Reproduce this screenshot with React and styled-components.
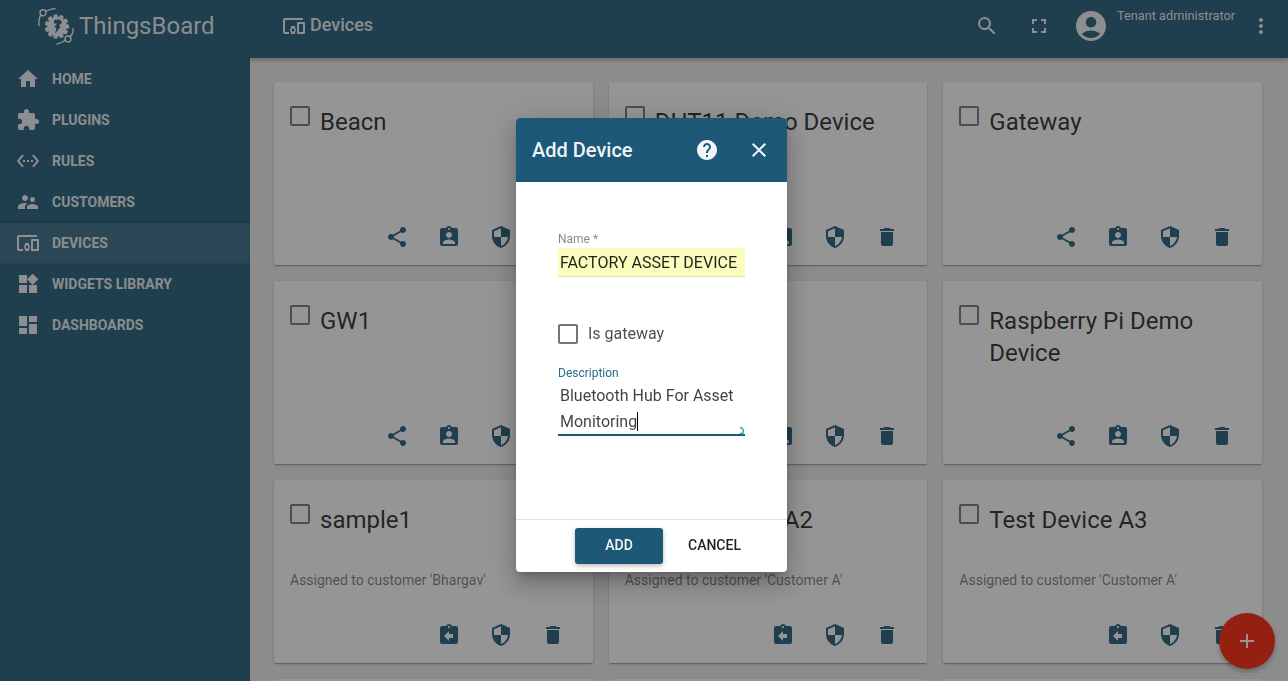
import React from "react";
import styled, { createGlobalStyle } from "styled-components";
import {
  MdHome, MdExtension, MdSettingsEthernet, MdSupervisorAccount, MdDevicesOther, MdWidgets, MdDashboard,
  MdShare, MdAssignmentInd, MdSecurity, MdDelete, MdAssignmentReturn, MdSearch, MdFullscreen,
  MdAccountCircle, MdMoreVert, MdHelp, MdClose, MdAdd,
} from "react-icons/md";

const Global = createGlobalStyle`
  html, body { margin: 0; padding: 0; height: 100%; overflow: hidden; }
  body { font-family: Roboto, "Liberation Sans", sans-serif; background: #eee; }
  * { box-sizing: border-box; }
`;

const Shell = styled.div`
  display: grid;
  grid-template-columns: 250px 1fr;
  width: 1288px;
  height: 681px;
  overflow: hidden;
  background: #eeeeee;
`;
const Sidebar = styled.aside`
  background: #1e5877;
  color: rgba(255,255,255,.92);
  display: flex;
  flex-direction: column;
  box-shadow: inset -1px 0 0 rgba(0,0,0,.12);
  z-index: 2;
`;
const Brand = styled.div`
  height: 59px;
  display: flex;
  align-items: center;
  gap: 4px;
  padding: 0 0 7px 37px;
  font-size: 24px;
  border-bottom: 1px solid rgba(0,0,0,.12);
`;
const NavItem = styled.div`
  height: 41px;
  display: flex;
  align-items: center;
  padding: 0 0 1px 16px;
  gap: 12px;
  font-size: 14px;
  font-weight: 700;
  text-transform: uppercase;
  border-bottom: 1px solid rgba(0,0,0,.12);
  background: ${(p) => (p.$active ? "rgba(255,255,255,.1)" : "transparent")};
  svg { width: 24px; height: 24px; flex: none; }
`;
const Main = styled.main`
  display: flex;
  flex-direction: column;
  min-width: 0;
`;
const Toolbar = styled.header`
  height: 58px;
  flex: none;
  background: #1e5877;
  color: rgba(255,255,255,.92);
  display: flex;
  align-items: center;
  padding: 0 15px 6px 32px;
  box-shadow: 0 2px 4px rgba(0,0,0,.3);
  z-index: 1;
`;
const PageTitle = styled.div`
  display: flex;
  align-items: center;
  gap: 4px;
  font-size: 18px;
  font-weight: 500;
  flex: 1;
  svg { width: 24px; height: 24px; }
  span { padding-bottom: 4px; }
`;
const ToolIcon = styled.span`
  display: flex;
  width: 52px;
  justify-content: center;
  svg { width: 24px; height: 24px; }
`;
const Avatar = styled.span`
  display: flex;
  margin-left: 8px;
  svg { width: 36px; height: 36px; }
`;
const UserName = styled.div`
  font-size: 12.75px;
  width: 132px;
  margin-left: 8px;
  align-self: flex-start;
  padding-top: 8px;
`;
const Grid = styled.div`
  display: grid;
  grid-template-columns: repeat(3, 1fr);
  grid-auto-rows: 183px;
  gap: 16px;
  padding: 24px 26px 0 24px;
`;
const Card = styled.article`
  background: #fff;
  border-radius: 2px;
  box-shadow: 0 1px 3px rgba(0,0,0,.2), 0 1px 1px rgba(0,0,0,.14), 0 2px 1px -1px rgba(0,0,0,.12);
  display: flex;
  flex-direction: column;
  padding: 24px 14px 16px 16px;
`;
const CardHead = styled.div`
  display: flex;
  gap: 10px;
`;
const Check = styled.span`
  display: block;
  flex: none;
  width: 20px;
  height: 20px;
  border: 2px solid rgba(0,0,0,.54);
  border-radius: 2px;
`;
const CardTitle = styled.h3`
  margin: 0;
  font-size: 24px;
  font-weight: 400;
  line-height: 32px;
  color: rgba(0,0,0,.87);
`;
const Sub = styled.div`
  margin-top: 34px;
  font-size: 14px;
  line-height: 20px;
  color: rgba(0,0,0,.54);
`;
const Actions = styled.div`
  margin-top: auto;
  display: flex;
  justify-content: flex-end;
`;
const Action = styled.span`
  display: flex;
  width: 52px;
  justify-content: center;
  color: #1e5877;
  svg { width: 24px; height: 24px; }
`;
const Fab = styled.button`
  position: fixed;
  left: 1219px;
  top: 613px;
  width: 56px;
  height: 56px;
  border: 0;
  border-radius: 50%;
  padding: 0;
  background: #ff1d00;
  color: #fff;
  display: flex;
  align-items: center;
  justify-content: center;
  box-shadow: 0 3px 5px rgba(0,0,0,.3);
  svg { width: 24px; height: 24px; }
`;
const Backdrop = styled.div`
  position: fixed;
  inset: 0;
  z-index: 5;
  background: rgba(33,33,33,.48);
  display: flex;
  align-items: flex-start;
  padding: 118px 0 0 516px;
`;
const Dialog = styled.section`
  width: 271px;
  height: 454px;
  background: #fff;
  border-radius: 4px;
  overflow: hidden;
  display: flex;
  flex-direction: column;
  box-shadow: 0 7px 8px -4px rgba(0,0,0,.2), 0 13px 19px 2px rgba(0,0,0,.14), 0 5px 24px 4px rgba(0,0,0,.12);
`;
const DialogHead = styled.div`
  height: 64px;
  flex: none;
  background: #1e5877;
  color: rgba(255,255,255,.95);
  display: flex;
  align-items: center;
  padding: 0 16px;
`;
const DialogTitle = styled.h2`
  margin: 0;
  flex: 1;
  font-size: 20px;
  font-weight: 500;
`;
const HeadIcon = styled.span`
  display: flex;
  width: 52px;
  justify-content: center;
  margin-right: ${(p) => (p.$end ? "-14px" : "0")};
  svg { width: 24px; height: 24px; }
`;
const DialogBody = styled.div`
  flex: 1;
  padding: 50px 42px 0;
  display: flex;
  flex-direction: column;
`;
const FieldLabel = styled.label`
  display: block;
  font-size: 12px;
  line-height: 14px;
  color: ${(p) => (p.$focus ? "#2a6a8e" : "rgba(0,0,0,.48)")};
`;
const Autofill = styled.div`
  height: 29px;
  margin-top: 2px;
  padding: 1px 2px 0;
  background: #fafdbd;
  border-bottom: 1px solid #dfe79a;
  font-size: 16px;
  line-height: 28px;
  color: rgba(0,0,0,.87);
  white-space: nowrap;
`;
const GatewayRow = styled.div`
  display: flex;
  align-items: center;
  gap: 10px;
  margin-top: 47px;
  height: 20px;
  font-size: 16px;
  color: rgba(0,0,0,.7);
  span + span { padding-bottom: 2px; }
`;
const DescriptionField = styled.div`
  margin-top: 22px;
`;
const TextArea = styled.div`
  position: relative;
  height: 54px;
  margin-top: 2px;
  padding: 1px 2px 0;
  border-bottom: 2px solid #1e5877;
  font-size: 16px;
  line-height: 26px;
  color: rgba(0,0,0,.75);
`;
const Caret = styled.span`
  display: inline-block;
  width: 1px;
  height: 19px;
  margin-bottom: -4px;
  background: #000;
`;
const Resize = styled.svg`
  position: absolute;
  right: 0;
  bottom: -1px;
  width: 6px;
  height: 8px;
`;
const DialogFoot = styled.div`
  height: 53px;
  flex: none;
  border-top: 1px solid rgba(0,0,0,.12);
  display: flex;
  align-items: center;
  padding: 0 0 1px 59px;
`;
const Primary = styled.button`
  width: 88px;
  height: 36px;
  border: 0;
  border-radius: 3px;
  background: #1e5877;
  color: rgba(255,255,255,.95);
  font: 500 14px Roboto, sans-serif;
  padding: 0 0 1px;
  box-shadow: 0 2px 5px rgba(0,0,0,.26);
`;
const Ghost = styled.button`
  width: 79px;
  margin-left: 12px;
  height: 36px;
  border: 0;
  background: transparent;
  color: rgba(0,0,0,.87);
  font: 500 14px Roboto, sans-serif;
  padding: 0 0 1px;
`;

const gearPath = (() => {
  const cx = 20, cy = 19.5, teeth = 11, pts = [];
  for (let i = 0; i < teeth; i++) {
    const a = (i / teeth) * Math.PI * 2;
    const s = (Math.PI * 2) / teeth;
    [[-0.5, 9.2], [-0.26, 12.3], [0.26, 12.3], [0.5, 9.2]].forEach(([o, r]) => {
      pts.push(`${(cx + Math.cos(a + o * s) * r).toFixed(2)} ${(cy + Math.sin(a + o * s) * r).toFixed(2)}`);
    });
  }
  return `M${pts.join("L")}Z M17 13 L23 12.5 L25 15.5 L22 18.5 L23.5 20 L18 26.5 L19.5 21 L17.5 20 L20 16.5 L17 16.5 Z`;
})();

const Logo = () => (
  <svg width="38" height="38" viewBox="0 0 38 38" fill="none" stroke="currentColor" strokeWidth="1.4" strokeLinecap="round">
    <path d="M2 18.5 C1.5 13 2.5 10 4 8 M8.5 4.5 C11 3 14 2 18 1.5" />
    <circle cx="6" cy="5.8" r="3" />
    <path d="M36 21.5 C36.5 25 35 28 33 30 M28.5 33 C26 35 23 36.5 20 37" />
    <circle cx="31" cy="32" r="3" />
    <path fill="currentColor" stroke="none" fillRule="evenodd" d={gearPath} />
  </svg>
);

const nav = [
  ["Home", MdHome], ["Plugins", MdExtension], ["Rules", MdSettingsEthernet], ["Customers", MdSupervisorAccount],
  ["Devices", MdDevicesOther, true], ["Widgets Library", MdWidgets], ["Dashboards", MdDashboard],
];

const owned = [MdShare, MdAssignmentInd, MdSecurity, MdDelete];
const assigned = [MdAssignmentReturn, MdSecurity, MdDelete];
const customerA = "Assigned to customer 'Customer A'";
const cards = [
  { title: "Beacn", icons: owned },
  { title: "DHT11 Demo Device", icons: owned },
  { title: "Gateway", icons: owned },
  { title: "GW1", icons: owned },
  { title: "Lamp", icons: owned },
  { title: "Raspberry Pi Demo Device", icons: owned },
  { title: "sample1", sub: "Assigned to customer 'Bhargav'", icons: assigned },
  { title: "Test Device A2", sub: customerA, icons: assigned },
  { title: "Test Device A3", sub: customerA, icons: assigned },
  { title: "", icons: [] },
  { title: "", icons: [] },
  { title: "", icons: [] },
];

export default function App() {
  return (
    <>
      <Global />
      <Shell>
        <Sidebar>
          <Brand><Logo /><span>ThingsBoard</span></Brand>
          {nav.map(([label, Icon, active]) => (
            <NavItem key={label} $active={active}><Icon /><span>{label}</span></NavItem>
          ))}
        </Sidebar>
        <Main>
          <Toolbar>
            <PageTitle><MdDevicesOther /><span>Devices</span></PageTitle>
            <ToolIcon><MdSearch /></ToolIcon>
            <ToolIcon><MdFullscreen /></ToolIcon>
            <Avatar><MdAccountCircle /></Avatar>
            <UserName>Tenant administrator</UserName>
            <MdMoreVert size={24} />
          </Toolbar>
          <Grid>
            {cards.map((c, i) => (
              <Card key={i}>
                <CardHead><Check /><CardTitle>{c.title}</CardTitle></CardHead>
                {c.sub && <Sub>{c.sub}</Sub>}
                <Actions>
                  {c.icons.map((Icon, k) => <Action key={k}><Icon /></Action>)}
                </Actions>
              </Card>
            ))}
          </Grid>
        </Main>
        <Fab aria-label="Add device"><MdAdd /></Fab>
      </Shell>
      <Backdrop>
        <Dialog>
          <DialogHead>
            <DialogTitle>Add Device</DialogTitle>
            <HeadIcon><MdHelp /></HeadIcon>
            <HeadIcon $end><MdClose /></HeadIcon>
          </DialogHead>
          <DialogBody>
            <div>
              <FieldLabel>Name *</FieldLabel>
              <Autofill>FACTORY ASSET DEVICE</Autofill>
            </div>
            <GatewayRow><Check /><span>Is gateway</span></GatewayRow>
            <DescriptionField>
              <FieldLabel $focus>Description</FieldLabel>
              <TextArea>
                Bluetooth Hub For Asset Monitoring<Caret />
                <Resize viewBox="0 0 6 8" fill="none" stroke="#14b884" strokeWidth="1.4"><path d="M1 1 H3 Q5.5 3.5 3.5 6.5 H1" /></Resize>
              </TextArea>
            </DescriptionField>
          </DialogBody>
          <DialogFoot>
            <Primary>ADD</Primary>
            <Ghost>CANCEL</Ghost>
          </DialogFoot>
        </Dialog>
      </Backdrop>
    </>
  );
}
